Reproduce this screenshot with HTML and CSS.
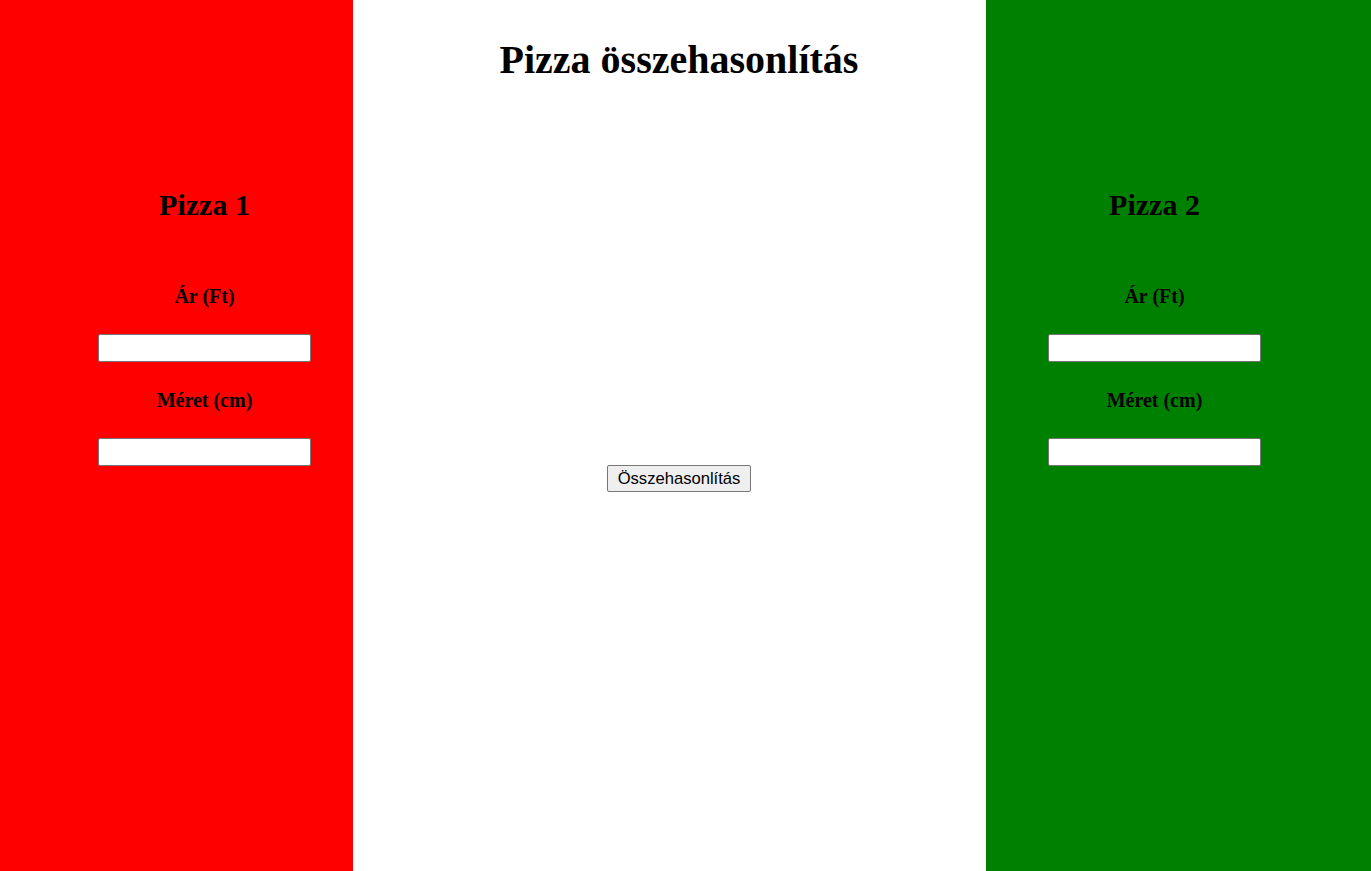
FILE: index.html
```html
<!DOCTYPE html>
<html lang="hu">
<head>
<meta charset="utf-8">
<title>Pizza összehasonlítás</title>
<link rel="stylesheet" href="styles.css">
</head>
<body>
<div class="page">
  <section class="side side-red">
    <h2 class="pizza-title">Pizza 1</h2>
    <label class="field-label" for="ar1">Ár (Ft)</label>
    <input class="field-input" id="ar1" type="text">
    <label class="field-label field-label-second" for="meret1">Méret (cm)</label>
    <input class="field-input" id="meret1" type="text">
  </section>
  <main class="center">
    <h1 class="main-title">Pizza összehasonlítás</h1>
    <button class="compare-btn" type="button">Összehasonlítás</button>
  </main>
  <section class="side side-green">
    <h2 class="pizza-title">Pizza 2</h2>
    <label class="field-label" for="ar2">Ár (Ft)</label>
    <input class="field-input" id="ar2" type="text">
    <label class="field-label field-label-second" for="meret2">Méret (cm)</label>
    <input class="field-input" id="meret2" type="text">
  </section>
</div>
</body>
</html>
```

FILE: styles.css
```css
html, body {
  margin: 0;
  padding: 0;
}

body {
  font-family: "Liberation Serif", "Times New Roman", serif;
  color: #000;
  background: #fff;
}

.page {
  display: grid;
  grid-template-columns: 353px 633px 1fr;
  height: 100vh;
  min-height: 871px;
}

.side {
  display: flex;
  flex-direction: column;
  align-items: center;
}

.side-red {
  background: #ff0000;
  padding-left: 56px;
}

.side-green {
  background: #008000;
  padding-right: 48px;
}

.pizza-title {
  margin: 188px 0 0;
  font-size: 30px;
  line-height: 33px;
  font-weight: bold;
}

.field-label {
  display: block;
  margin-top: 64px;
  font-size: 20px;
  line-height: 22px;
  font-weight: bold;
}

.field-label-second {
  margin-top: 27px;
}

.field-input {
  box-sizing: border-box;
  width: 213px;
  height: 28px;
  margin-top: 27px;
  border: 1px solid #767676;
  border-radius: 2px;
  background: #fff;
  padding: 1px 2px;
  font-family: "Liberation Sans", Arial, sans-serif;
  font-size: 16px;
}

.center {
  display: flex;
  flex-direction: column;
  align-items: center;
  padding-left: 19px;
  background: #fff;
}

.main-title {
  margin: 38px 0 0;
  font-size: 40px;
  line-height: 44px;
  font-weight: bold;
  white-space: nowrap;
}

.compare-btn {
  box-sizing: border-box;
  margin-top: 383px;
  height: 27px;
  width: 144px;
  padding: 0 6px;
  font-family: "Liberation Sans", Arial, sans-serif;
  font-size: 16.6px;
  color: #000;
  background: #efefef;
  border: 1px solid #767676;
  border-radius: 2px;
}
```
